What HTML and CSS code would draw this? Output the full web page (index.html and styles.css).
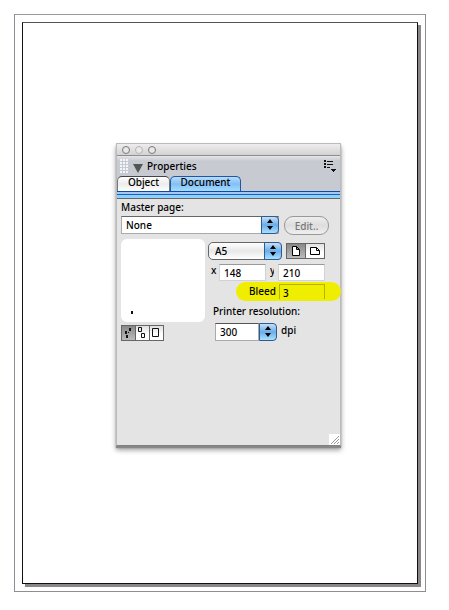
FILE: index.html
```html
<!DOCTYPE html>
<html lang="en">
<head>
    <meta charset="UTF-8" />
    <meta name="viewport" content="width=device-width, initial-scale=1.0" />
    <title>Document Properties</title>
    <link rel="stylesheet" href="styles.css">
</head>
<body>
    <div class="pasteboard">
      <div class="page">
        <section class="panel" aria-label="Properties">
          <div class="titlebar">
            <button class="light" aria-label="Close"></button>
            <button class="light faint" aria-label="Minimize"></button>
            <button class="light" aria-label="Zoom"></button>
          </div>

          <header class="header">
            <div class="heading">
              <svg class="grip" width="9" height="15" viewBox="0 0 9 15" fill="#f4f5f8">
                <path d="M0 0h2v2H0zM3 0h2v2H3zM6 0h2v2H6zM0 3h2v2H0zM3 3h2v2H3zM6 3h2v2H6zM0 6h2v2H0zM3 6h2v2H3zM6 6h2v2H6zM0 9h2v2H0zM3 9h2v2H3zM6 9h2v2H6zM0 12h2v2H0zM3 12h2v2H3zM6 12h2v2H6z" />
              </svg>
              <svg class="triangle" width="10" height="9" viewBox="0 0 10 9" fill="#555"><path d="M0 0h10L5 9z" /></svg>
              <h1>Properties</h1>
              <button class="menu" aria-label="Panel menu">
                <svg width="13" height="13" viewBox="0 0 13 13" fill="#111">
                  <path d="M1 0h2v2H1zM1 3h2v2H1zM1 6h2v2H1zM4 1h6v1H4zM4 4h6v1H4zM4 7h3v1H4zM8 9h5v1h-1v1h-1v1h-1v-1H9v-1H8z" />
                </svg>
              </button>
            </div>
            <div class="tabs">
              <button class="tab">Object</button>
              <button class="tab active">Document</button>
            </div>
          </header>

          <div class="body">
            <label class="master-label" for="master">Master page:</label>
            <div class="master-row">
              <span class="select square">
                <select id="master"><option>None</option></select>
                <svg class="arrows" width="16" height="16" viewBox="0 0 16 16"><path d="M8 2l3 4H5zM8 13l3-4H5z" /></svg>
              </span>
              <button class="edit" disabled>Edit..</button>
            </div>

            <div class="columns">
              <div class="left">
                <div class="preview"><span class="dot"></span></div>
                <div class="icon-group">
                  <button class="pressed" aria-label="Small thumbnails">
                    <svg width="13" height="14" viewBox="0 0 13 14" fill="#111"><path d="M7 2h2v3H7zM3 5h2v3H3zM6 6h1v1H6zM4 9h2v3H4z" /></svg>
                  </button>
                  <button aria-label="Facing pages">
                    <svg width="13" height="14" viewBox="0 0 13 14" fill="none" stroke="#111"><path d="M2.500 1.500h3v4h-3zM5.500 7.500h3v4h-3z" /></svg>
                  </button>
                  <button aria-label="Single page">
                    <svg width="13" height="14" viewBox="0 0 13 14" fill="none" stroke="#111"><path d="M2.500 2.500h6v8h-6z" /></svg>
                  </button>
                </div>
              </div>

              <div class="right">
                <div class="size-row">
                  <span class="select round">
                    <select aria-label="Page size"><option>A5</option></select>
                    <svg class="arrows" width="16" height="16" viewBox="0 0 16 16"><path d="M8 2l3 4H5zM8 13l3-4H5z" /></svg>
                  </span>
                  <div class="icon-group">
                    <button class="pressed" aria-label="Portrait">
                      <svg width="18" height="14" viewBox="0 0 18 14" fill="#fff" stroke="#000"><path d="M5.500 2.500h4l3 3v6h-7zM9.500 2.500v3h3" /></svg>
                    </button>
                    <button aria-label="Landscape">
                      <svg width="18" height="14" viewBox="0 0 18 14" fill="#fff" stroke="#000"><path d="M4.500 3.500h6l3 3v4h-9zM10.500 3.500v3h3" /></svg>
                    </button>
                  </div>
                </div>

                <div class="dims">
                  <label for="width">x</label>
                  <input type="text" id="width" value="148" />
                  <label class="clipped" for="height">y</label>
                  <input type="text" id="height" value="210" />
                </div>

                <div class="bleed">
                  <label for="bleed">Bleed</label>
                  <input type="text" id="bleed" value="3" />
                </div>

                <label class="resolution-label" for="resolution">Printer resolution:</label>
                <div class="resolution">
                  <input type="text" id="resolution" value="300" />
                  <button class="stepper" aria-label="Choose resolution">
                    <svg width="16" height="16" viewBox="0 0 16 16"><path d="M8 2l3 4H5zM8 13l3-4H5z" /></svg>
                  </button>
                  <span class="unit">dpi</span>
                </div>
              </div>
            </div>
          </div>

          <svg class="resize" width="11" height="11" viewBox="0 0 11 11">
            <path fill="#fff" d="M0 0h11v11H0z" />
            <path stroke="#999" d="M2 10l8-8M5 10l5-5M8 10l2-2" />
          </svg>
        </section>
      </div>
    </div>
</body>
</html>
```

FILE: styles.css
```css
* {
  box-sizing: border-box;
}
body {
  margin: 0;
  padding: 14px 23px 18px 14px;
  min-height: 100vh;
  display: flex;
  background: #fff;
  color: #000;
  font: 500 10px/14px "Noto Sans", sans-serif;
}
button,
input,
select {
  margin: 0;
  padding: 0;
  border: 0;
  border-radius: 0;
  background: none;
  color: inherit;
  font: inherit;
  appearance: none;
}
svg {
  display: block;
}
.pasteboard {
  flex: 1;
  display: flex;
  padding: 7px;
  border: 1px solid #8e8e94;
  border-top: 1px solid #999;
}
.page {
  flex: 1;
  padding: 120px 76px 0 93px;
  border: 1px solid #111;
  border-top-color: #555;
  box-shadow: 3px 3px 0 #8b8789;
}
.panel {
  position: relative;
  display: flex;
  flex-direction: column;
  min-height: 303px;
  border: 1px solid #bbb;
  border-bottom: 1px solid #808080;
  background: #e4e4e4;
  box-shadow: 0 2px 1px #888, 0 4px 5px rgba(0, 0, 0, 0.4);
}

/* Window chrome */
.titlebar {
  display: flex;
  align-items: center;
  gap: 5px;
  height: 12px;
  padding-left: 5px;
  border-bottom: 1px solid #8e8e8e;
  background: linear-gradient(#eee, #d2d2d2);
}
.light {
  width: 8px;
  height: 8px;
  border: 1px solid #777;
  border-radius: 50%;
  background: #e8e8e8;
}
.light.faint {
  border-color: #b5b5b5;
}
.header {
  border-bottom: 1px solid #666;
  background: linear-gradient(#e4e5e8, #c8cad2 5px);
}
.heading {
  display: flex;
  align-items: center;
  height: 20px;
  padding: 0 4px 0 3px;
}
.grip {
  margin-right: 4px;
}
.triangle {
  margin: 4px 4px 0 0;
}
h1 {
  flex: 1;
  margin: 0;
  font: inherit;
}
.tabs {
  display: flex;
  height: 15px;
}
.tab {
  width: 53px;
  height: 15px;
  padding-bottom: 3px;
  border: 1px solid #777;
  border-top-color: #444;
  border-bottom: 0;
  border-radius: 5px 5px 0 0;
  background: linear-gradient(#fff, #ececec 50%, #fff);
  line-height: 11px;
}
.tab.active {
  width: 71px;
  border-color: #1d57a5;
  background: linear-gradient(#b9dcfa, #83bff5 50%, #a5dcff);
}
.header::after {
  content: "";
  display: block;
  height: 6px;
  border-top: 1px solid #0e4ba5;
  background: linear-gradient(#a8c8f0 0 2px, #1462bb 2px 3px, #8fd0ff 3px);
}

/* Form */
.body {
  padding: 1px 0 0 4px;
}
.master-label {
  display: block;
}
.master-row {
  display: flex;
  gap: 5px;
  margin-top: 2px;
}
.select {
  position: relative;
}
.select select {
  display: block;
  width: 100%;
  height: 18px;
  padding: 0 20px 0 4px;
  background: #fff;
  line-height: 16px;
}
.square {
  width: 158px;
}
.square select {
  border: 1px solid #aaa;
  border-top-color: #666;
}
.round {
  width: 74px;
}
.round select {
  padding-left: 6px;
  border: 1px solid #666;
  border-radius: 5px;
  background: linear-gradient(#fff, #e8e8e8 50%, #fff);
}
.arrows {
  position: absolute;
  top: 0;
  right: 0;
  box-sizing: content-box;
  pointer-events: none;
}
.arrows,
.stepper {
  border: 1px solid #2c5a91;
  border-radius: 0 4px 4px 0;
  background: linear-gradient(#c5e0f8, #6bade9 50%, #a8e0ff);
}
.edit {
  width: 45px;
  height: 19px;
  border: 1px solid #999;
  border-radius: 9px;
  background: linear-gradient(#eee, #ddd 50%, #f0f0f0);
  color: #777;
}
.columns {
  display: flex;
  gap: 3px;
  margin-top: 4px;
}
.left {
  width: 84px;
}
.preview {
  height: 83px;
  padding: 72px 0 0 10px;
  border-radius: 6px;
  background: #fff;
}
.dot {
  display: block;
  width: 2px;
  height: 3px;
  background: #111;
}
.icon-group {
  display: inline-flex;
  border: 1px solid #666;
  background: #666;
  gap: 1px;
}
.icon-group button {
  background: linear-gradient(#e0e0e0, #fff 60%);
}
.icon-group .pressed {
  background: linear-gradient(#888, #bbb);
}
.left .icon-group {
  margin-top: 3px;
}
.right {
  flex: 1;
  padding-top: 3px;
}
.size-row {
  display: flex;
  align-items: center;
  gap: 4px;
}
.dims {
  display: flex;
  gap: 4px;
  margin-top: 4px;
  padding-left: 3px;
}
.dims label {
  width: 4px;
  line-height: 12px;
}
.dims .clipped {
  overflow: hidden;
}
.dims input {
  width: 47px;
  height: 17px;
  padding-left: 4px;
  border: 1px solid #d2d2d2;
  border-top-color: #999;
  background: #fff;
}
.bleed {
  display: flex;
  gap: 4px;
  height: 19px;
  margin: 1px -1px 0 28px;
  padding: 2px 0 2px 13px;
  border-radius: 10px;
  background: #f0ee00;
}
.bleed label {
  width: 26px;
}
.bleed input {
  width: 46px;
  height: 15px;
  padding: 2px 0 0 3px;
  border: 1px solid #b5b300;
  border-bottom: 0;
}
.resolution-label {
  display: block;
  margin: 3px 0 0 5px;
}
.resolution {
  display: flex;
  margin-top: 5px;
  padding-left: 7px;
}
.resolution input {
  width: 44px;
  height: 18px;
  padding-left: 4px;
  border: 1px solid #aaa;
  border-top-color: #555;
  background: #fff;
}
.stepper {
  width: 18px;
  height: 18px;
}
.unit {
  margin-left: 4px;
}
.resize {
  position: absolute;
  right: 0;
  bottom: 0;
}
```
